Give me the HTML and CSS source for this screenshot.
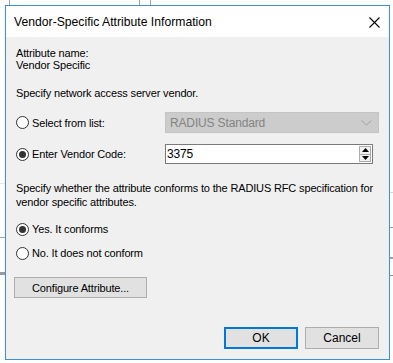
FILE: index.html
```html
<!DOCTYPE html>
<html lang="en">
<head>
    <meta charset="UTF-8">
    <meta name="viewport" content="width=device-width, initial-scale=1.0">
    <title>Vendor-Specific Attribute Information</title>
    <link rel="stylesheet" href="styles.css">
</head>
<body>
    <div class="dialog">
        <div class="titlebar">
            <span class="title">Vendor-Specific Attribute Information</span>
            <svg class="close" width="11" height="11" viewBox="0 0 11 11">
                <path d="M0.5 0.5 L10.5 10.5 M10.5 0.5 L0.5 10.5" stroke="#000" stroke-width="1.1" fill="none"/>
            </svg>
        </div>

        <div class="content">
            <div class="attr-name">
                <div>Attribute name:</div>
                <div>Vendor Specific</div>
            </div>

            <p class="prompt">Specify network access server vendor.</p>

            <div class="vendor-grid">
                <label class="radio row-list"><span class="dot"></span>Select from list:</label>
                <div class="combo">
                    <span>RADIUS Standard</span>
                    <svg width="11" height="6" viewBox="0 0 11 6">
                        <path d="M0.5 0.5 L5.5 5 L10.5 0.5" stroke="#a2a2a2" stroke-width="1" fill="none"/>
                    </svg>
                </div>

                <label class="radio row-code"><span class="dot checked"></span>Enter Vendor Code:</label>
                <div class="spin">
                    <span class="spin-value">3375</span>
                    <div class="spin-buttons">
                        <div class="spin-btn">
                            <svg width="7" height="4" viewBox="0 0 7 4"><path d="M3.5 0 L7 4 L0 4 Z" fill="#000"/></svg>
                        </div>
                        <div class="spin-btn">
                            <svg width="7" height="4" viewBox="0 0 7 4"><path d="M0 0 L7 0 L3.5 4 Z" fill="#000"/></svg>
                        </div>
                    </div>
                </div>
            </div>

            <p class="conform-text">Specify whether the attribute conforms to the RADIUS RFC specification for vendor specific attributes.</p>

            <label class="radio conform-yes"><span class="dot checked"></span>Yes. It conforms</label>
            <label class="radio conform-no"><span class="dot"></span>No. It does not conform</label>

            <button class="btn configure">Configure Attribute...</button>

            <div class="footer">
                <button class="btn default">OK</button>
                <button class="btn">Cancel</button>
            </div>
        </div>
    </div>
</body>
</html>
```

FILE: styles.css
```css
/* window behind the dialog */
body {
    margin: 0;
    padding-top: 5px;
    width: 393px;
    height: 358px;
    overflow: hidden;
    font-family: "Liberation Sans", Arial, sans-serif;
    font-size: 11px;
    letter-spacing: -0.15px;
    color: #000;
    background-color: #fff;
    background-image:
        linear-gradient(#e3e3e3, #e3e3e3),
        linear-gradient(#a0a0a0, #a0a0a0),
        linear-gradient(#9a9a9a, #9a9a9a),
        linear-gradient(#d8d8d8, #d8d8d8),
        linear-gradient(#9a9a9a, #9a9a9a),
        linear-gradient(#a0a0a0, #a0a0a0),
        linear-gradient(#8a8a8a, #8a8a8a),
        linear-gradient(#a0a0a0, #a0a0a0),
        linear-gradient(#a0a0a0, #a0a0a0),
        linear-gradient(#a0a0a0, #a0a0a0);
    background-repeat: no-repeat;
    background-size:
        5px 1px, 5px 1px, 5px 3px,
        4px 1px, 4px 1px, 4px 2px, 4px 1px,
        1px 5px, 1px 5px, 1px 5px;
    background-position:
        0 183px, 0 237px, 0 272px,
        389px 192px, 389px 227px, 389px 257px, 389px 275px,
        9px 0, 139px 0, 150px 0;
}

.dialog {
    box-sizing: border-box;
    width: 385px;
    height: 355px;
    margin-left: 5px;
    border: 1px solid #3d8fdc;
    background-color: #f0f0f0;
    display: flex;
    flex-direction: column;
}

.titlebar {
    height: 31px;
    background-color: #fff;
    display: flex;
    align-items: center;
    justify-content: space-between;
    padding: 0 9px 0 8px;
}
.title {
    font-family: "Liberation Sans", Arial, sans-serif;
    font-size: 12.2px;
    letter-spacing: 0;
    color: #000;
}
.close {
    margin-top: 1px;
}

.content {
    flex: 1;
    display: flex;
    flex-direction: column;
    padding: 10px 10px 10px 10px;
    line-height: 12px;
}

.attr-name {
    line-height: 12px;
}
.prompt {
    margin: 16px 0 0 0;
}

.vendor-grid {
    display: grid;
    grid-template-columns: 149px 1fr;
    grid-template-rows: 21px 20px;
    row-gap: 11px;
    margin-top: 13px;
    align-items: center;
}

.radio {
    display: flex;
    align-items: center;
    height: 16px;
}
.dot {
    box-sizing: border-box;
    width: 13px;
    height: 13px;
    border: 1px solid #333;
    border-radius: 50%;
    background-color: #fff;
    margin-right: 3px;
    flex: none;
    display: flex;
    align-items: center;
    justify-content: center;
}
.dot.checked::after {
    content: "";
    width: 7px;
    height: 7px;
    border-radius: 50%;
    background-color: #333;
}

.combo {
    box-sizing: border-box;
    height: 21px;
    background-color: #cccccc;
    border: 1px solid #c4c4c4;
    color: #838383;
    display: flex;
    align-items: center;
    justify-content: space-between;
    padding: 0 6px 0 4px;
    font-size: 12px;
}

.spin {
    box-sizing: border-box;
    width: 208px;
    height: 20px;
    background-color: #fff;
    border: 1px solid #7a7a7a;
    display: flex;
    align-items: center;
    justify-content: space-between;
    padding: 0 1px 0 1px;
    font-size: 12px;
}
.spin-buttons {
    box-sizing: border-box;
    width: 12px;
    height: 16px;
    border: 1px solid #adadad;
    display: flex;
    flex-direction: column;
}
.spin-btn {
    flex: 1;
    display: flex;
    align-items: center;
    justify-content: center;
    background-color: #f0f0f0;
}
.spin-btn + .spin-btn {
    border-top: 1px solid #adadad;
}

.conform-text {
    margin: 17px 0 0 0;
    line-height: 14px;
}
.conform-yes {
    margin-top: 12px;
}
.conform-no {
    margin-top: 8px;
}

.btn {
    box-sizing: border-box;
    font-family: "Liberation Sans", Arial, sans-serif;
    font-size: 11px;
    letter-spacing: -0.15px;
    color: #000;
    background-color: #e1e1e1;
    border: 1px solid #adadad;
    padding: 0;
    height: 21px;
}
.configure {
    width: 133px;
    margin: 16px 0 0 -2px;
    align-self: flex-start;
}

.footer {
    margin-top: auto;
    display: flex;
    justify-content: flex-end;
    gap: 7px;
}
.footer .btn {
    width: 74px;
    height: 22px;
    font-size: 12px;
    letter-spacing: 0;
}
.footer .default {
    border: 2px solid #0078d7;
}
```
